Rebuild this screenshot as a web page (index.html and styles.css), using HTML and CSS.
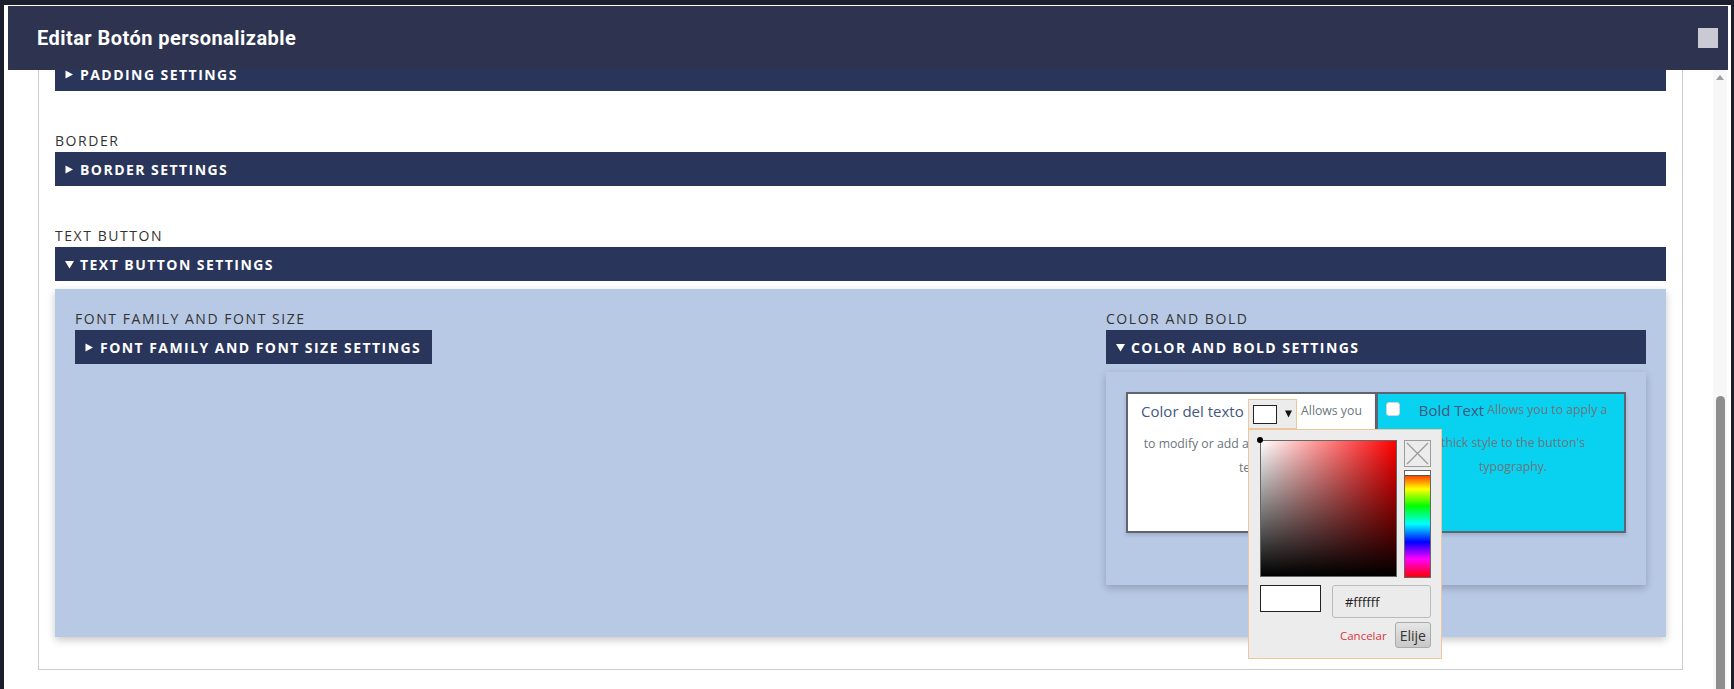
FILE: index.html
```html
<!DOCTYPE html>
<html lang="es">
<head>
<meta charset="utf-8">
<title>Editar Botón personalizable</title>
<link rel="stylesheet" href="styles.css">
</head>
<body>
<div class="modal">
  <header class="modal-header">
    <h1 class="modal-title">Editar Botón personalizable</h1>
    <span class="close-box"></span>
  </header>
  <div class="modal-body">
    <div class="viewport">
      <div class="frame">
        <section class="section">
          <div class="bar"><svg class="tri" viewBox="0 0 9 9"><path d="M0.5 0.5L8 4.5L0.5 8.5Z"/></svg><span>PADDING SETTINGS</span></div>
        </section>
        <section class="section">
          <div class="label">BORDER</div>
          <div class="bar"><svg class="tri" viewBox="0 0 9 9"><path d="M0.5 0.5L8 4.5L0.5 8.5Z"/></svg><span>BORDER SETTINGS</span></div>
        </section>
        <section class="section">
          <div class="label">TEXT BUTTON</div>
          <div class="bar"><svg class="tri" viewBox="0 0 9 9"><path d="M0 1L9 1L4.5 8.5Z"/></svg><span>TEXT BUTTON SETTINGS</span></div>
          <div class="panel">
            <div class="col">
              <div class="label">FONT FAMILY AND FONT SIZE</div>
              <div class="bar bar-inline"><svg class="tri" viewBox="0 0 9 9"><path d="M0.5 0.5L8 4.5L0.5 8.5Z"/></svg><span>FONT FAMILY AND FONT SIZE SETTINGS</span></div>
            </div>
            <div class="col">
              <div class="label">COLOR AND BOLD</div>
              <div class="bar"><svg class="tri" viewBox="0 0 9 9"><path d="M0 1L9 1L4.5 8.5Z"/></svg><span>COLOR AND BOLD SETTINGS</span></div>
              <div class="subpanel">
                <div class="card card-white">
                  <div class="card-text"><span class="opt-title">Color del texto</span> <span class="picker"><span class="swatch"><span class="swatch-color"></span><svg class="swatch-arrow" viewBox="0 0 7 8"><path d="M0 0.5L7 0.5L3.5 7.5Z"/></svg></span><span class="popup">
                        <span class="pk-top">
                          <span class="sv"><span class="sv-dot"></span></span>
                          <span class="pk-side">
                            <span class="pk-clear"><svg viewBox="0 0 25 25" width="25" height="25"><path d="M2 2L23 23M23 2L2 23" stroke="#9b9b9b" stroke-width="1.3" fill="none"/></svg></span>
                            <span class="hue"><span class="hue-mark"></span></span>
                          </span>
                        </span>
                        <span class="pk-mid">
                          <span class="pk-preview"></span>
                          <input class="pk-hex" type="text" value="#ffffff">
                        </span>
                        <span class="pk-foot">
                          <span class="pk-cancel">Cancelar</span>
                          <button class="pk-ok" type="button">Elije</button>
                        </span>
                      </span></span> Allows you to modify or add a color to the button text.</div>
                </div>
                <div class="card card-cyan">
                  <input class="check" type="checkbox">
                  <div class="card-text"><span class="opt-title">Bold Text</span> Allows you to apply a thick style to the button's typography.</div>
                </div>
              </div>
            </div>
          </div>
        </section>
      </div>
    </div>
    <div class="scrollbar"><span class="scroll-up"></span><span class="thumb"></span></div>
  </div>
</div>
</body>
</html>
```

FILE: styles.css
```css
* { box-sizing: border-box; }

html, body {
  margin: 0;
  padding: 0;
}

body {
  background: #1b1e2c;
  font-family: "Open Sans", "Noto Sans", sans-serif;
  height: 689px;
  overflow: hidden;
}

.modal {
  margin: 5px 3px 0 4px;
  height: 684px;
  background: #ffffff;
  display: flex;
  flex-direction: column;
  overflow: hidden;
}

.modal-header {
  flex: none;
  margin: 1px 3px 0 4px;
  height: 64px;
  background: #2e3450;
  display: flex;
  align-items: center;
  justify-content: space-between;
  padding: 0 10px 0 29px;
}

.modal-title {
  margin: 0;
  font-family: Roboto, "Liberation Sans", sans-serif;
  font-weight: 700;
  font-size: 20px;
  letter-spacing: 0.45px;
  color: #ffffff;
}

.close-box {
  width: 20px;
  height: 20px;
  background: #c9cad3;
}

.modal-body {
  flex: 1;
  display: flex;
  min-height: 0;
}

.viewport {
  flex: 1;
  overflow: hidden;
}

.frame {
  margin: -14px 0 0 34px;
  width: 1645px;
  border: 1px solid #cccccc;
  padding: 0 16px 32px;
}

.section + .section { margin-top: 40px; }

.label {
  font-size: 14px;
  line-height: 19px;
  letter-spacing: 1.55px;
  color: #333333;
  margin-bottom: 2px;
  white-space: nowrap;
}

.bar {
  height: 34px;
  background: #29355a;
  color: #ffffff;
  display: flex;
  align-items: center;
  gap: 6px;
  padding: 0 11px 0 10px;
  font-weight: 700;
  font-size: 14px;
  letter-spacing: 1.45px;
  white-space: nowrap;
}

.bar-inline { display: inline-flex; }

.tri {
  flex: none;
  width: 9px;
  height: 9px;
  fill: #ffffff;
}

.panel {
  margin-top: 8px;
  background: #b8c9e6;
  box-shadow: 0 3px 8px rgba(0, 0, 0, 0.22);
  padding: 20px 20px 52px;
  display: grid;
  grid-template-columns: 1fr 540px;
  align-items: start;
}

.subpanel {
  margin-top: 8px;
  background: #b8c9e6;
  box-shadow: 0 3px 8px rgba(0, 0, 0, 0.22);
  padding: 20px 20px 52px;
  display: grid;
  grid-template-columns: 250px 250px;
}

.card {
  min-height: 141px;
  border: 2px solid #5f6472;
  box-shadow: 0 2px 4px rgba(0, 0, 0, 0.15);
}

.card-white {
  background: #ffffff;
  border-right-width: 1px;
  padding: 5px 10px 0;
}

.card-cyan {
  background: #09d2f0;
  display: flex;
  align-items: flex-start;
  padding: 4px 4px 0 8px;
}

.card-text {
  flex: 1;
  font-size: 12.25px;
  line-height: 24px;
  color: #6c757d;
  text-align: center;
}

.opt-title {
  display: inline-block;
  vertical-align: top;
  font-size: 15px;
  line-height: 24px;
  margin-bottom: 9px;
  color: #44587e;
}

.check {
  appearance: none;
  -webkit-appearance: none;
  flex: none;
  width: 14px;
  height: 14px;
  margin: 4px 6px 0 0;
  background: #ffffff;
  border: 1px solid #d4d4d4;
  border-radius: 3px;
}

.picker {
  position: relative;
  display: inline-block;
  vertical-align: top;
  margin: 0 1px;
}

.swatch {
  display: flex;
  align-items: center;
  width: 49px;
  height: 30px;
  padding: 0 0 0 4px;
  background: #ececec;
  border: 1px solid #efc79c;
}

.swatch-color {
  width: 24px;
  height: 19px;
  background: #ffffff;
  border: 1px solid #222222;
}

.swatch-arrow {
  width: 7px;
  height: 8px;
  margin-left: 8px;
  fill: #111111;
}

.popup {
  position: absolute;
  left: 0;
  top: 100%;
  z-index: 5;
  display: block;
  width: 194px;
  background: #ececec;
  border: 1px solid #efc79c;
  padding: 10px 10px 10px 11px;
  text-align: left;
  line-height: normal;
}

.pk-top {
  display: flex;
  gap: 7px;
}

.sv {
  position: relative;
  display: block;
  flex: none;
  width: 137px;
  height: 137px;
  border: 1px solid #666666;
  background:
    linear-gradient(to top, #000000, rgba(0, 0, 0, 0)),
    linear-gradient(to right, #ffffff, #ff0000);
}

.sv-dot {
  position: absolute;
  left: -4px;
  top: -4px;
  width: 6px;
  height: 6px;
  border-radius: 50%;
  background: #000000;
}

.pk-side {
  display: flex;
  flex-direction: column;
  gap: 3px;
  width: 27px;
}

.pk-clear {
  display: block;
  width: 27px;
  height: 27px;
  border: 1px solid #9b9b9b;
}

.pk-clear svg { display: block; }

.hue {
  position: relative;
  display: block;
  height: 108px;
  border: 1px solid #666666;
  background: linear-gradient(to bottom, #ff0000 0%, #ffff00 17%, #00ff00 33%, #00ffff 50%, #0000ff 67%, #ff00ff 83%, #ff0000 100%);
}

.hue-mark {
  position: absolute;
  left: 0;
  right: 0;
  top: 0;
  height: 5px;
  background: #ffffff;
  border-bottom: 1px solid #555555;
}

.pk-mid {
  display: flex;
  align-items: flex-start;
  gap: 11px;
  margin-top: 7px;
}

.pk-preview {
  display: block;
  width: 61px;
  height: 27px;
  border: 1px solid #222222;
  background: #ffffff;
}

.pk-hex {
  width: 99px;
  height: 33px;
  margin: 0;
  border: 1px solid #bbbbbb;
  border-radius: 3px;
  background: #ebebeb;
  font-family: "Open Sans", "Noto Sans", sans-serif;
  font-size: 13px;
  color: #222222;
  padding: 0 0 0 12px;
  outline: none;
}

.pk-foot {
  display: flex;
  justify-content: flex-end;
  align-items: center;
  gap: 8px;
  margin-top: 4px;
}

.pk-cancel {
  color: #d9363e;
  font-size: 11.5px;
}

.pk-ok {
  height: 26px;
  margin: 0;
  padding: 0 4px;
  border: 1px solid #aaaaaa;
  border-radius: 3px;
  background: linear-gradient(#e6e6e6, #c8c8c8);
  font-family: "Open Sans", "Noto Sans", sans-serif;
  font-size: 14px;
  color: #333333;
}

.scrollbar {
  flex: none;
  width: 14px;
  margin-right: 4px;
  background: #f7f7f7;
  display: flex;
  flex-direction: column;
  align-items: center;
  overflow: hidden;
}

.scroll-up {
  flex: none;
  margin-top: 5px;
  width: 0;
  height: 0;
  border-left: 4px solid transparent;
  border-right: 4px solid transparent;
  border-bottom: 5px solid #a0a0a0;
}

.thumb {
  flex: none;
  margin-top: 316px;
  width: 9px;
  height: 400px;
  border-radius: 5px;
  background: #8e8e8e;
}
```
